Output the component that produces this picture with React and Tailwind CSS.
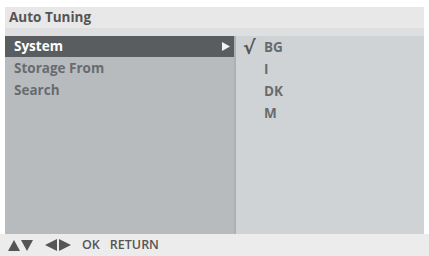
export default function App() {
  const font = { fontFamily: '"Open Sans", "Noto Sans", sans-serif' };
  return (
    <div className="w-[429px] h-[256px] bg-white flex flex-col pt-[7px] pl-[5px] pr-[5px] overflow-hidden" style={font}>
      <div className="h-[21px] bg-[#e8e8e8] flex items-center pl-[4px] text-[13.5px] font-bold text-[#555] shrink-0">Auto Tuning</div>
      <div className="h-[8px] bg-[#dedfe0] shrink-0" />
      <div className="flex flex-1 min-h-0">
        <div className="w-[231px] bg-[#b8bbbe] flex flex-col border-r-2 border-[#aeb1b4]">
          <div className="h-[21px] bg-[#5a5d60] flex items-center justify-between pl-[9px] pr-[4px] text-white text-[13.5px] font-bold">
            <span>System</span>
            <svg width="8" height="9" viewBox="0 0 8 9"><polygon points="0,0 8,4.5 0,9" fill="#f2f2f2" /></svg>
          </div>
          <div className="h-[23px] flex items-center pl-[9px] text-[13.5px] font-bold text-[#686b6e]">Storage From</div>
          <div className="h-[21px] flex items-center pl-[9px] text-[13.5px] font-bold text-[#686b6e]">Search</div>
        </div>
        <div className="flex-1 bg-[#d0d3d6] flex flex-col pl-[7px] text-[13.5px] font-bold text-[#686b6e]">
          <div className="h-[22px] flex items-center">
            <span className="w-[21px] text-[19px] leading-none font-bold text-[#555]" style={{ fontFamily: '"DejaVu Sans", sans-serif' }}>√</span>
            <span>BG</span>
          </div>
          <div className="h-[22px] flex items-center"><span className="w-[21px]" /><span>I</span></div>
          <div className="h-[22px] flex items-center"><span className="w-[21px]" /><span>DK</span></div>
          <div className="h-[22px] flex items-center"><span className="w-[21px]" /><span>M</span></div>
        </div>
      </div>
      <div className="h-[22px] bg-[#ececec] -mx-[5px] flex items-center pl-[8px] text-[12.5px] font-semibold text-[#555] shrink-0">
        <span className="flex items-center gap-[1px]">
          <svg width="12" height="11" viewBox="0 0 12 11"><polygon points="6,0 12,11 0,11" fill="#555" /></svg>
          <svg width="12" height="11" viewBox="0 0 12 11"><polygon points="0,0 12,0 6,11" fill="#555" /></svg>
        </span>
        <span className="flex items-center gap-[2px] ml-[12px]">
          <svg width="12" height="12" viewBox="0 0 12 12"><polygon points="12,0 12,12 0,6" fill="#555" /></svg>
          <svg width="12" height="12" viewBox="0 0 12 12"><polygon points="0,0 12,6 0,12" fill="#555" /></svg>
        </span>
        <span className="ml-[11px]">OK</span>
        <span className="ml-[10px]">RETURN</span>
      </div>
    </div>
  );
}
